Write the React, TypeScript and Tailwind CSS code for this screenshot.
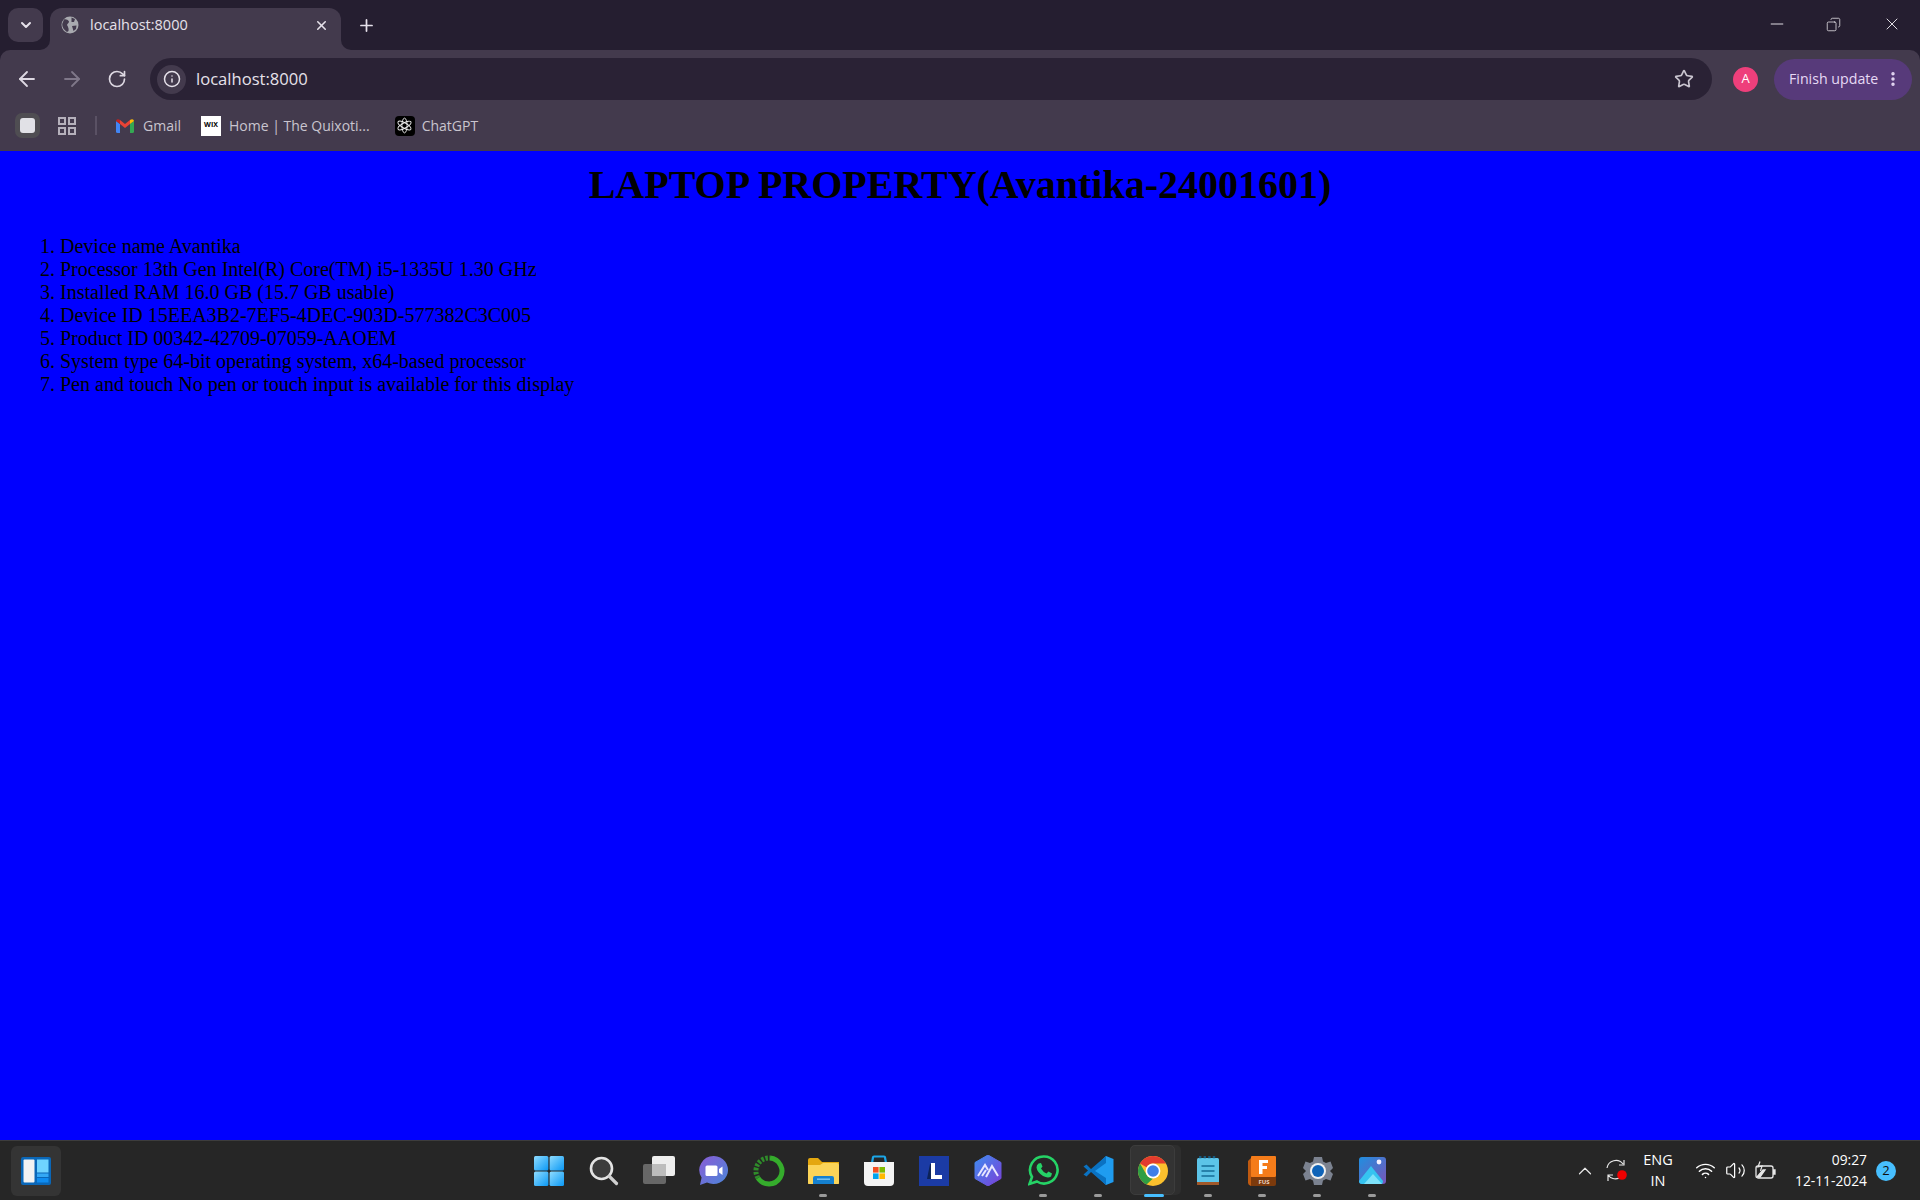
import React from 'react';
import { ArrowLeft, ArrowRight, ChevronDown, ChevronUp, Copy, EllipsisVertical, Info, Minus, Plus, RotateCw, Star, Volume2, Wifi, X } from 'lucide-react';

const specs = [
  'Device name Avantika',
  'Processor 13th Gen Intel(R) Core(TM) i5-1335U 1.30 GHz',
  'Installed RAM 16.0 GB (15.7 GB usable)',
  'Device ID 15EEA3B2-7EF5-4DEC-903D-577382C3C005',
  'Product ID 00342-42709-07059-AAOEM',
  'System type 64-bit operating system, x64-based processor',
  'Pen and touch No pen or touch input is available for this display',
];

const GlobeFilled = () => (
  <svg width="18" height="18" viewBox="0 0 18 18">
    <circle cx="9" cy="9" r="8.5" fill="#a9aab0" />
    <path d="M3 3.5 C5 3 7 4 8 5.5 C8 7 6.5 7.5 6 9 C7 11 8 12 7.5 15 L6 16 C3 14 1 11 1.2 8 Z" fill="#433a4d" />
    <path d="M10.5 1.5 L14 3 L13 6 L10.5 6 Z M11 10 L15.5 9.5 L15 13 L12.5 15 Z" fill="#433a4d" />
  </svg>
);

const TabStrip = () => (
  <div className="h-[50px] bg-[#251e30] flex items-end pl-2 shrink-0">
    <div className="h-[34px] w-[35px] mb-2 rounded-[10px] bg-[#433a4d] flex items-center justify-center">
      <ChevronDown size={16} strokeWidth={3} className="text-[#e6e1ea]" />
    </div>
    <div className="relative h-[42px] w-[291px] ml-[7px] pb-[8px] bg-[#433a4d] rounded-t-[12px] flex items-center pl-[11px] pr-[12px]">
      <span className="absolute -left-[10px] bottom-0 w-[10px] h-[10px] bg-[#433a4d]">
        <span className="block w-full h-full bg-[#251e30] rounded-br-[10px]" />
      </span>
      <span className="absolute -right-[10px] bottom-0 w-[10px] h-[10px] bg-[#433a4d]">
        <span className="block w-full h-full bg-[#251e30] rounded-bl-[10px]" />
      </span>
      <GlobeFilled />
      <span className="ml-[11px] text-[14.5px] text-[#e6e1ea] flex-1">localhost:8000</span>
      <X size={15} strokeWidth={2.5} className="text-[#e6e1ea]" />
    </div>
    <div className="h-[42px] ml-[16px] pb-[8px] flex items-center">
      <Plus size={19} strokeWidth={2.2} className="text-[#e6e1ea]" />
    </div>
    <div className="ml-auto h-[50px] pb-[2px] flex items-center text-[#f0edf2]">
      <div className="w-[56px] flex justify-center">
        <Minus size={20} strokeWidth={1.1} />
      </div>
      <div className="w-[56px] mr-[3px] flex justify-center">
        <Copy size={15} strokeWidth={1.2} className="-scale-x-100" />
      </div>
      <div className="w-[56px] flex justify-center">
        <X size={20} strokeWidth={1.1} />
      </div>
    </div>
  </div>
);

const AddressBar = () => (
  <div className="h-[42px] mt-2 flex items-center">
    <div className="w-[150px] flex items-center text-[#ddd8e2] pl-[15px] gap-[21px]">
      <ArrowLeft size={24} strokeWidth={1.8} />
      <ArrowRight size={24} strokeWidth={1.8} className="text-[#7f7789]" />
      <RotateCw size={20} strokeWidth={2} className="ml-[2px]" />
    </div>
    <div className="w-[1562px] h-[42px] rounded-full bg-[#2a2235] flex items-center pl-[7px] pr-[18px]">
      <div className="w-[29px] h-[29px] rounded-full bg-[#433a4d] flex items-center justify-center">
        <Info size={18} strokeWidth={2} className="text-[#e6e1ea]" />
      </div>
      <span className="ml-[10px] text-[16.6px] text-[#e6e1ea] flex-1">localhost:8000</span>
      <Star size={20} strokeWidth={2} className="text-[#c9c5cf]" />
    </div>
    <div className="ml-[21px] w-[25px] h-[25px] rounded-full bg-[#ee3f7b] flex items-center justify-center text-[13px] text-white">
      A
    </div>
    <div className="ml-[16px] h-[41px] w-[138px] rounded-full bg-[#573a7a] flex items-center pl-[15px] text-[14.2px] text-[#e6d9f5]">
      <span>Finish update</span>
      <EllipsisVertical size={18} strokeWidth={2.6} className="ml-[6px]" />
    </div>
  </div>
);

const GmailIcon = () => (
  <svg width="18" height="14" viewBox="0 0 18 14">
    <path d="M0 2 L0 12.5 Q0 14 1.5 14 L4 14 L4 5 Z" fill="#4285f4" />
    <path d="M14 14 L16.5 14 Q18 14 18 12.5 L18 2 L14 5 Z" fill="#34a853" />
    <path d="M14 5 L18 2 Q17.5 -0.5 15 0.5 L14 1 Z" fill="#fbbc04" />
    <path d="M4 5 L9 9 L14 5 L14 1 L9 5 L4 1 Z" fill="#ea4335" />
    <path d="M0 2 L4 5 L4 1 L3 0.5 Q0.5 -0.5 0 2 Z" fill="#c5221f" />
  </svg>
);

const ChatGptIcon = () => (
  <span className="w-5 h-5 rounded-[4px] bg-black flex items-center justify-center">
    <svg width="17" height="17" viewBox="0 0 17 17" fill="none" stroke="#f2f2f2" strokeWidth="0.9">
      <ellipse cx="8.5" cy="8.5" rx="2.6" ry="7.4" />
      <ellipse cx="8.5" cy="8.5" rx="2.6" ry="7.4" transform="rotate(60 8.5 8.5)" />
      <ellipse cx="8.5" cy="8.5" rx="2.6" ry="7.4" transform="rotate(120 8.5 8.5)" />
    </svg>
  </span>
);

const BookmarksBar = () => (
  <div className="h-[50px] pt-[1px] flex items-center pl-[15px] text-[14px] text-[#c9c5cf]">
    <div className="w-[25px] h-[25px] rounded-[7px] bg-[#4f4d52] flex items-center justify-center">
      <div className="w-[15px] h-[15px] rounded-[3px] bg-[#e1e1e6]" />
    </div>
    <svg width="18" height="18" viewBox="0 0 18 18" fill="none" stroke="#b5b0bb" strokeWidth="2" className="ml-[18px]">
      <rect x="1" y="1" width="6" height="6" />
      <rect x="11" y="1" width="6" height="6" />
      <rect x="1" y="11" width="6" height="6" />
      <rect x="11" y="11" width="6" height="6" />
    </svg>
    <div className="w-[2px] h-[19px] bg-[#5a5164] ml-[19px]" />
    <div className="ml-[19px] flex items-center gap-[9px]">
      <GmailIcon />
      <span>Gmail</span>
    </div>
    <div className="ml-[20px] flex items-center gap-[8px]">
      <span className="w-5 h-5 bg-white text-black text-[7px] font-bold flex items-center justify-center">WIX</span>
      <span>Home | The Quixoti...</span>
    </div>
    <div className="ml-[25px] flex items-center gap-[7px]">
      <ChatGptIcon />
      <span>ChatGPT</span>
    </div>
  </div>
);

const WinLogo = () => (
  <svg width="30" height="30" viewBox="0 0 30 30">
    <defs>
      <linearGradient id="win" x1="0" y1="0" x2="1" y2="1">
        <stop offset="0" stopColor="#8fdcff" />
        <stop offset="1" stopColor="#0a98f5" />
      </linearGradient>
    </defs>
    <rect x="0" y="0" width="14.4" height="14.4" rx="1.5" fill="url(#win)" />
    <rect x="15.6" y="0" width="14.4" height="14.4" rx="1.5" fill="url(#win)" />
    <rect x="0" y="15.6" width="14.4" height="14.4" rx="1.5" fill="url(#win)" />
    <rect x="15.6" y="15.6" width="14.4" height="14.4" rx="1.5" fill="url(#win)" />
  </svg>
);

const SearchIcon = () => (
  <svg width="30" height="30" viewBox="0 0 30 30">
    <circle cx="12.5" cy="12.5" r="10.5" fill="#3c3c3c" stroke="#e4e4e4" strokeWidth="2.6" />
    <path d="M20.5 20.5 L27.5 27.5" stroke="#d0d0d0" strokeWidth="3.2" strokeLinecap="round" />
  </svg>
);

const TaskViewIcon = () => (
  <svg width="32" height="30" viewBox="0 0 32 30">
    <rect x="9" y="0" width="23" height="20" rx="2" fill="#eeeeee" />
    <rect x="0" y="8" width="23" height="20" rx="2" fill="#6c6c6c" fillOpacity="0.92" />
    <rect x="9" y="8" width="14" height="12" fill="#bdbdbd" />
  </svg>
);

const MeetIcon = () => (
  <svg width="30" height="30" viewBox="0 0 30 30">
    <defs>
      <linearGradient id="meet" x1="0" y1="0" x2="1" y2="1">
        <stop offset="0" stopColor="#8a5cd6" />
        <stop offset="1" stopColor="#4a86d8" />
      </linearGradient>
    </defs>
    <path d="M15 0 A14.5 14 0 1 1 8 26.5 L1 29 L2.6 21.5 A14.5 14 0 0 1 15 0 Z" fill="url(#meet)" />
    <rect x="6.5" y="9.5" width="12" height="10.5" rx="1.5" fill="#fff" />
    <path d="M20 13 L23.5 10.5 L23.5 19 L20 16.5 Z" fill="#fff" />
  </svg>
);

const RingIcon = () => (
  <svg width="32" height="32" viewBox="0 0 32 32" fill="none">
    <path d="M17 3 A13 13 0 1 1 5 23" stroke="#35ac2c" strokeWidth="5" />
    <path d="M5 23 A13 13 0 0 1 17 3" stroke="#2f8c2a" strokeWidth="5" strokeDasharray="2.5 1.5" />
  </svg>
);

const FolderIcon = () => (
  <svg width="31" height="28" viewBox="0 0 31 28">
    <path d="M0 3 Q0 1 2 1 L10 1 L14 5 L31 5 L31 26 Q31 27 30 27 L1 27 Q0 27 0 26 Z" fill="#e4a70f" />
    <path d="M0 8 L12 8 L15 6 L29 6 Q31 6 31 8 L31 26 Q31 27 30 27 L1 27 Q0 27 0 26 Z" fill="#fbd458" />
    <path d="M5 27 L5 21 Q5 19 7 19 L24 19 Q26 19 26 21 L26 27 Z" fill="#1580cf" />
    <rect x="9" y="21.5" width="13" height="1.4" fill="#7fc7f2" />
  </svg>
);

const StoreIcon = () => (
  <svg width="30" height="31" viewBox="0 0 30 31">
    <path d="M8 8 L9 2.5 Q9 1.5 10 1.5 L20 1.5 Q21 1.5 21 2.5 L22 8" fill="none" stroke="#1ba6e8" strokeWidth="2.2" />
    <path d="M0 7 L30 7 L30 27 Q30 31 26 31 L4 31 Q0 31 0 27 Z" fill="#f4f4f4" />
    <rect x="9" y="12" width="5.6" height="5.6" fill="#f25022" />
    <rect x="15.4" y="12" width="5.6" height="5.6" fill="#7fba00" />
    <rect x="9" y="18.4" width="5.6" height="5.6" fill="#00a4ef" />
    <rect x="15.4" y="18.4" width="5.6" height="5.6" fill="#ffb900" />
  </svg>
);

const LIcon = () => (
  <svg width="30" height="30" viewBox="0 0 30 30">
    <rect width="30" height="30" fill="#1b3ba5" />
    <path d="M8 23 L11 8 L13 8 L13 23 Z" fill="#0d2357" />
    <path d="M12 7 L16 7 L16 19 L23 19 L23 23 L12 23 Z" fill="#fff" />
  </svg>
);

const HexIcon = () => (
  <svg width="28" height="31" viewBox="0 0 28 31">
    <defs>
      <linearGradient id="hex" x1="0" y1="0" x2="1" y2="1">
        <stop offset="0" stopColor="#3f8df0" />
        <stop offset="1" stopColor="#7a3fd8" />
      </linearGradient>
    </defs>
    <path d="M14 0 L27 7.5 L27 23.5 L14 31 L1 23.5 L1 7.5 Z" fill="url(#hex)" stroke="url(#hex)" strokeLinejoin="round" />
    <path d="M4 21 L11 10 L14 15 M12 22 L18 11 L24 21 M8 21 L12 15" fill="none" stroke="#e8e6ff" strokeWidth="2" />
  </svg>
);

const WhatsAppIcon = () => (
  <svg width="31" height="31" viewBox="0 0 31 31">
    <path d="M16 1.5 A13.5 13.5 0 1 1 9 26.5 L1.5 29 L4 22 A13.5 13.5 0 0 1 16 1.5 Z" fill="#262626" stroke="#25d366" strokeWidth="2.6" />
    <path d="M10.5 8.5 L13 8 L14.5 11.5 L13 13.5 Q15 17 18.5 18.5 L20.5 16.5 L24 18.5 L23 21.5 Q20 23.5 15 21 Q9 17 8.5 12.5 Q8.5 10 10.5 8.5 Z" fill="#25d366" />
  </svg>
);

const VsCodeIcon = () => (
  <svg width="31" height="31" viewBox="0 0 31 31">
    <path d="M23 1 L30.5 4 L30.5 27 L23 30 L8 16 Z" fill="#1f9cf0" />
    <path d="M23 1 L23 8 L12 16 L23 23 L23 30 L8 17 L3.5 21.5 L0.5 19.5 L5 15.5 L0.5 11.5 L3.5 9.5 L8 14 Z" fill="#0a72c2" />
  </svg>
);

const ChromeIcon = () => (
  <svg width="30" height="30" viewBox="0 0 30 30">
    <circle cx="15" cy="15" r="15" fill="#fbc02d" />
    <path d="M15 0 A15 15 0 0 1 28 7.5 L15 7.5 A7.5 7.5 0 0 0 8.5 11.2 L2 7.5 A15 15 0 0 1 15 0 Z" fill="#e33b2e" />
    <path d="M2 7.5 L8.5 18.7 A7.5 7.5 0 0 0 15 22.5 L8.5 28.5 A15 15 0 0 1 2 7.5 Z" fill="#2f9e44" />
    <circle cx="15" cy="15" r="7.4" fill="#fff" />
    <circle cx="15" cy="15" r="5.8" fill="#3f7ee8" />
  </svg>
);

const NotepadIcon = () => (
  <svg width="22" height="30" viewBox="0 0 22 30">
    <rect x="0" y="2" width="22" height="26" rx="1.5" fill="#5cc4e8" />
    <rect x="0" y="26" width="22" height="3" fill="#a0582a" />
    <path d="M2 1 H20" stroke="#155a80" strokeWidth="2.4" strokeDasharray="2.4 2.2" />
    <path d="M4.5 10 H17.5 M4.5 15 H17.5 M4.5 20 H17.5" stroke="#146c96" strokeWidth="1.6" />
  </svg>
);

const FusionIcon = () => (
  <svg width="29" height="30" viewBox="0 0 29 30">
    <path d="M0 5 L5 0 L5 22 L3 30 Q0 29 0 27 Z" fill="#c05a10" />
    <rect x="3" y="0" width="25" height="21" rx="1" fill="#f57c1a" />
    <path d="M3 21 L28 21 L28 28 Q28 30 26 30 L3 30 Z" fill="#7c3a0c" />
    <path d="M11 4 H20 V7 H14.5 V10 H19 V13 H14.5 V18 H11 Z" fill="#fff" />
    <text x="16" y="28" textAnchor="middle" fontSize="6" fontWeight="700" fontFamily="'Open Sans', sans-serif" fill="#e8d4c4">FUS</text>
  </svg>
);

const GearIcon = () => (
  <svg width="30" height="30" viewBox="0 0 30 30">
    <path d="M11 1 H19 L20 5.5 L23 7 L27.5 5.5 L30 12 L27 15 L30 18 L27.5 24.5 L23 23 L20 24.5 L19 29 H11 L10 24.5 L7 23 L2.5 24.5 L0 18 L3 15 L0 12 L2.5 5.5 L7 7 L10 5.5 Z" fill="#7b8290" />
    <circle cx="15" cy="15" r="8" fill="#f0f0f0" />
    <circle cx="15" cy="15" r="6" fill="#0f63b8" />
  </svg>
);

const PhotosIcon = () => (
  <svg width="27" height="27" viewBox="0 0 27 27">
    <defs>
      <linearGradient id="ph" x1="0" y1="0" x2="1" y2="1">
        <stop offset="0" stopColor="#1f8fe0" />
        <stop offset="1" stopColor="#7a55b8" />
      </linearGradient>
    </defs>
    <rect width="27" height="27" rx="3" fill="url(#ph)" />
    <circle cx="20" cy="5" r="2.4" fill="#f4f0ff" />
    <path d="M0 24 L12 9 L24 24 Q24 27 22 27 L3 27 Q0 27 0 24 Z" fill="#35c3f0" />
    <path d="M5 27 L14 17 L23 27 Z" fill="#7ee2fa" />
  </svg>
);

const WidgetsIcon = () => (
  <svg width="30" height="28" viewBox="0 0 30 28">
    <rect width="30" height="28" rx="2" fill="#0a67b8" />
    <rect x="2.5" y="2.5" width="11" height="23" rx="1" fill="#f2f2f2" />
    <rect x="16" y="2.5" width="11.5" height="13" fill="#6fd3ff" />
    <rect x="16" y="16.5" width="11.5" height="3.5" fill="#34a8f5" />
    <rect x="16" y="21" width="11.5" height="4.5" fill="#0f8cf0" />
  </svg>
);

const SyncIcon = () => (
  <svg width="22" height="24" viewBox="0 0 22 24" fill="none" stroke="#e8e8e8" strokeWidth="1.2">
    <path d="M1 9 A9 9 0 0 1 17 5 M18 1 V6 H13" />
    <path d="M13 19 A9 9 0 0 1 2 16 M2 22 V16 H7" />
    <circle cx="16" cy="16" r="4.8" fill="#f00000" stroke="none" />
  </svg>
);

const BatteryIcon = () => (
  <svg width="22" height="20" viewBox="0 0 22 20" fill="none" stroke="#e8e8e8" strokeWidth="1.3">
    <rect x="1" y="5" width="17" height="12" rx="2" />
    <path d="M18 9 H20 V13 H18" fill="#e8e8e8" />
    <path d="M2 16 L8 9 L10 9 L5 16 Z" fill="#e8e8e8" />
    <path d="M5 0.5 L3 6 L7 5 L5.5 10" strokeWidth="1.2" />
  </svg>
);

const taskbarIcons = [
  { icon: <WinLogo /> },
  { icon: <SearchIcon /> },
  { icon: <TaskViewIcon /> },
  { icon: <MeetIcon /> },
  { icon: <RingIcon /> },
  { icon: <FolderIcon />, open: true },
  { icon: <StoreIcon /> },
  { icon: <LIcon /> },
  { icon: <HexIcon /> },
  { icon: <WhatsAppIcon />, open: true },
  { icon: <VsCodeIcon />, open: true },
  { icon: <ChromeIcon />, active: true },
  { icon: <NotepadIcon />, open: true },
  { icon: <FusionIcon />, open: true },
  { icon: <GearIcon />, open: true },
  { icon: <PhotosIcon />, open: true },
];

const Taskbar = () => (
  <div className="relative h-[60px] shrink-0 bg-[#262626] border-t border-[#3d3d3d] grid grid-cols-[1fr_880px_1fr] text-white">
    <div className="pl-[11px] flex items-center">
      <div className="w-[50px] h-[50px] rounded-[6px] bg-[#343434] flex items-center justify-center">
        <WidgetsIcon />
      </div>
    </div>
    <div className="flex pl-[2px]">
      {taskbarIcons.map((item, i) => (
        <div key={i} className="relative w-[55px] h-[59px] flex items-center justify-center">
          {item.active && (
            <>
              <div className="absolute left-[4px] top-[4px] w-[51px] h-[50px] rounded-[5px] bg-[#2e2e2e]" />
              <div className="absolute left-[4px] top-[4px] w-[45px] h-[50px] rounded-[5px] bg-[#333333] border border-[#3c3c3c]" />
            </>
          )}
          <div className="relative">{item.icon}</div>
          {item.open && <div className="absolute bottom-[3px] left-[23px] w-2 h-[3px] rounded-full bg-[#9a9a9a]" />}
          {item.active && <div className="absolute bottom-[3px] left-[18px] w-5 h-[3px] rounded-full bg-[#47bfff]" />}
        </div>
      ))}
    </div>
    <div className="flex items-center justify-end pr-[24px]">
      <ChevronUp size={22} strokeWidth={1.3} className="text-[#e8e8e8]" />
      <div className="ml-[10px]">
        <SyncIcon />
      </div>
      <div className="ml-[10px] w-[40px] pb-[1px] text-center text-[14.5px] leading-[21px]">
        <div>ENG</div>
        <div>IN</div>
      </div>
      <div className="ml-[17px] flex items-center gap-[9px]">
        <Wifi size={21} strokeWidth={1.7} />
        <Volume2 size={21} strokeWidth={1.4} />
        <BatteryIcon />
      </div>
      <div className="ml-[18px] pb-[2px] text-right text-[13.8px] leading-[21px]">
        <div>09:27</div>
        <div>12-11-2024</div>
      </div>
      <div className="ml-[9px] w-5 h-5 rounded-full bg-[#47bfff] flex items-center justify-center text-[13px] text-[#101010]">
        2
      </div>
    </div>
  </div>
);

export default function App() {
  return (
    <div className="h-[1200px] w-[1920px] flex flex-col overflow-hidden bg-[#251e30] font-['Open_Sans',sans-serif]">
      <TabStrip />
      <div className="h-[101px] shrink-0 bg-[#433a4d] rounded-t-[10px]">
        <AddressBar />
        <BookmarksBar />
      </div>
      <main className="flex-1 bg-[#0000ff] text-black font-['Liberation_Serif',serif] pt-[11px] px-[10px]">
        <h1 className="text-[40px] leading-[46px] font-bold text-center">LAPTOP PROPERTY(Avantika-24001601)</h1>
        <ol className="mt-[27px] pl-[50px] list-decimal text-[20px] leading-[23px]">
          {specs.map((s) => (
            <li key={s}>{s}</li>
          ))}
        </ol>
      </main>
      <Taskbar />
    </div>
  );
}
